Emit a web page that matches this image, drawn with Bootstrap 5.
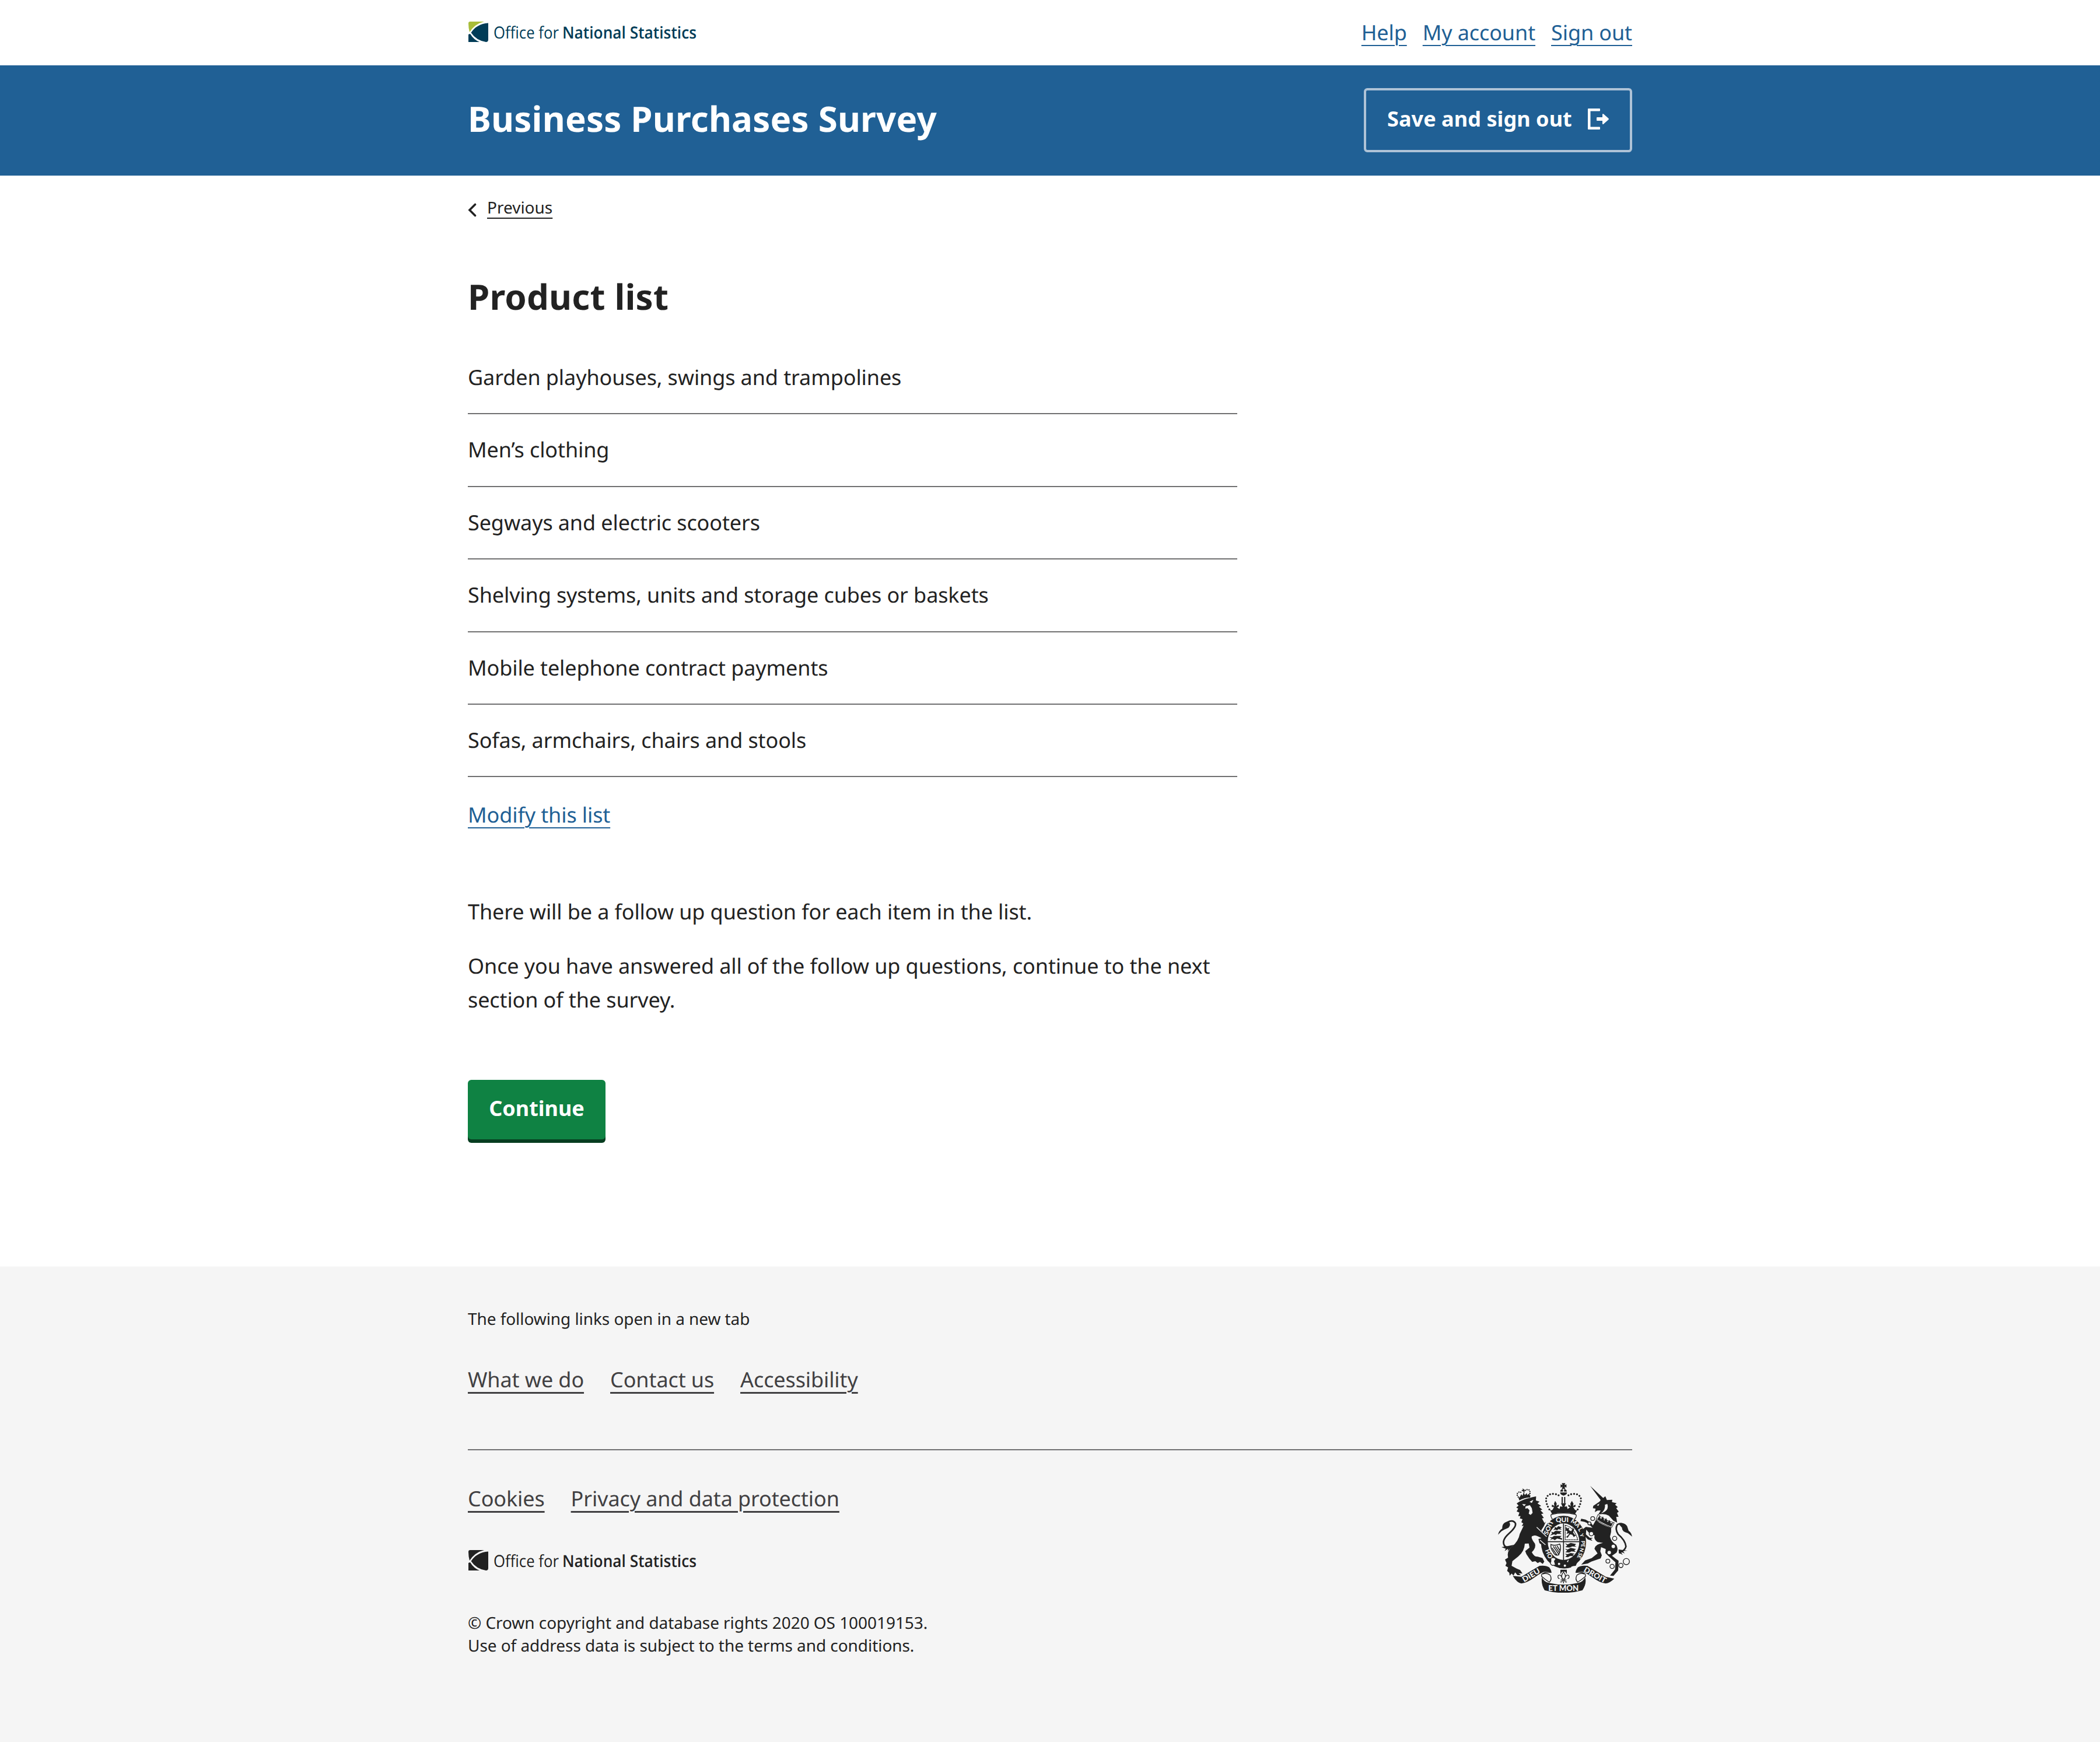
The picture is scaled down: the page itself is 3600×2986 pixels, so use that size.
<!DOCTYPE html>
<html lang="en">
<head>
<meta charset="utf-8">
<meta name="viewport" content="width=device-width, initial-scale=1">
<title>Product list - Business Purchases Survey</title>
<link href="https://cdn.jsdelivr.net/npm/bootstrap@5.3.0/dist/css/bootstrap.min.css" rel="stylesheet">
<style>
  body { font-family: "Noto Sans", sans-serif; font-size: 36px; line-height: 58px; color: #222; background: #fff; text-rendering: geometricPrecision; letter-spacing: -.11px; }
  .ons-wrap { width: 1996px; margin-left: 802px; }
  .ons-narrow { width: 1319px; }
  a { color: #206095; text-decoration: underline; text-decoration-thickness: 2px; text-underline-offset: 8px; }
  .ons-top { height: 112px; }
  .ons-top .ons-logo { margin-top: 31px; }
  .ons-toplinks { gap: 27px; padding-top: 27px; }
  .ons-banner { height: 189px; background: #206095; padding-top: 39px; }
  .ons-title { font-size: 60px; line-height: 80px; font-weight: 700; margin: 0; letter-spacing: .19px; }
  .ons-banner .ons-title { margin-top: 12px; color: #fff; }
  .ons-save { width: 460px; height: 110px; padding: 20px 36px 0; border: 4px solid #afc3d7; border-radius: 6px; color: #fff; font-size: 36px; line-height: 58px; font-weight: 700; letter-spacing: .06px; }
  .ons-save svg { margin-top: 11px; }
  .ons-back { padding-top: 35px; font-size: 28px; line-height: 40px; letter-spacing: 0; }
  .ons-back a { color: #222; margin-left: 18px; text-underline-offset: 7px; }
  .ons-back svg { margin-top: 12px; }
  .ons-main { height: 1870px; }
  .ons-heading { margin-top: 92px; }
  .ons-items { margin-top: 38px; }
  .ons-items li { padding: 32px 0; line-height: 58.4px; border-bottom: 2px solid #707071; }
  .ons-modify { margin-top: 35.6px; }
  .ons-text { margin-top: 108px; }
  .ons-text p { margin-bottom: 35px; }
  .ons-go { margin-top: 108px; width: 236px; height: 102px; padding: 20px 0 0; border: 0; border-radius: 6px; background: #0f8243; color: #fff; font-size: 36px; line-height: 58px; font-weight: 700; letter-spacing: 0; box-shadow: 0 6px 0 #073d20; }
  .ons-foot { height: 815px; background: #f5f5f5; padding-top: 70px; }
  .ons-foot a { color: #414042; text-decoration-thickness: 3px; }
  .ons-fine { font-size: 28px; line-height: 40px; margin: 0; letter-spacing: -.07px; }
  .ons-links { gap: 45px; }
  .ons-foot .ons-links.first { margin-top: 55px; }
  .ons-rule { margin-top: 90px; height: 2px; background: #707071; }
  .ons-links.second { margin-top: 54px; }
  .ons-foot .ons-logo { margin-top: 53px; }
  .ons-copy { margin-top: 56px; font-size: 28px; line-height: 39px; letter-spacing: -.06px; }
  .ons-crest { margin-top: 56px; letter-spacing: 0; }
  .ons-logo { display: block; overflow: visible; letter-spacing: 0; }
</style>
</head>
<body>
<header>
  <div class="ons-top">
    <div class="ons-wrap d-flex justify-content-between align-items-start">
      <svg class="ons-logo" width="420" height="56" viewBox="0 0 420 56">
        <path fill="#a8bd3a" d="M1 9Q1 6 4 6H28Q12 10 3 24Q1 17 1 9Z"/>
        <path fill="#003c57" d="M35 8.500V37Q35 41 31 41Q14 38 5.500 25Q15 10 35 8.500ZM1 28L4 27Q10 37 20 41H1Z"/>
        <g fill="#003c57" font-family="Open Sans, Noto Sans, sans-serif" font-size="28.500"><text x="44" y="35" font-weight="390" textLength="112" lengthAdjust="spacingAndGlyphs">Office for</text><text x="162" y="35" font-weight="640" textLength="230" lengthAdjust="spacingAndGlyphs">National Statistics</text></g>
      </svg>
      <nav class="ons-toplinks d-flex"><a href="#">Help</a><a href="#">My account</a><a href="#">Sign out</a></nav>
    </div>
  </div>
  <div class="ons-banner">
    <div class="ons-wrap d-flex justify-content-between align-items-start">
      <div class="ons-title">Business Purchases Survey</div>
      <button class="ons-save btn d-flex justify-content-between align-items-start" type="button"><span>Save and sign out</span>
        <svg width="36" height="36" viewBox="0 0 36 36" fill="#fff"><path d="M1 0H20Q21 0 21 1V3.500Q21 4.500 20 4.500H4.500V31.500H20Q21 31.500 21 32.500V35Q21 36 20 36H1Q0 36 0 35V1Q0 0 1 0Z"/><path d="M16 15H25V10.500Q25 8 27 9.500L35.500 17Q36.200 18 35.500 19L27 26.500Q25 28 25 25.500V21H16Q15 21 15 20V16Q15 15 16 15Z"/></svg>
      </button>
    </div>
  </div>
</header>
<main class="ons-main">
  <div class="ons-wrap">
    <div class="ons-back d-flex align-items-start"><svg width="15" height="24" viewBox="0 0 15 24"><path d="M12.500 2.500L3 12L12.500 21.500" fill="none" stroke="#222" stroke-width="3.600" stroke-linecap="round"/></svg><a href="#">Previous</a></div>
    <div class="ons-narrow">
      <h1 class="ons-title ons-heading">Product list</h1>
      <ul class="ons-items list-unstyled mb-0">
        <li>Garden playhouses, swings and trampolines</li>
        <li>Men’s clothing</li>
        <li>Segways and electric scooters</li>
        <li>Shelving systems, units and storage cubes or baskets</li>
        <li>Mobile telephone contract payments</li>
        <li>Sofas, armchairs, chairs and stools</li>
      </ul>
      <div class="ons-modify"><a href="#">Modify this list</a></div>
      <div class="ons-text"><p>There will be a follow up question for each item in the list.</p><p>Once you have answered all of the follow up questions, continue to the next section of the survey.</p></div>
      <button class="ons-go btn d-flex justify-content-center align-items-start" type="button">Continue</button>
    </div>
  </div>
</main>
<footer class="ons-foot">
  <div class="ons-wrap">
    <p class="ons-fine">The following links open in a new tab</p>
    <div class="ons-links first d-flex"><a href="#">What we do</a><a href="#">Contact us</a><a href="#">Accessibility</a></div>
    <div class="ons-rule"></div>
    <div class="d-flex justify-content-between align-items-start">
      <div>
        <div class="ons-links second d-flex"><a href="#">Cookies</a><a href="#">Privacy and data protection</a></div>
        <svg class="ons-logo" width="420" height="56" viewBox="0 0 420 56">
          <path fill="#222" d="M1 9Q1 6 4 6H28Q12 10 3 24Q1 17 1 9Z"/>
          <path fill="#222" d="M35 8.500V37Q35 41 31 41Q14 38 5.500 25Q15 10 35 8.500ZM1 28L4 27Q10 37 20 41H1Z"/>
          <g fill="#222" font-family="Open Sans, Noto Sans, sans-serif" font-size="28.500"><text x="44" y="35" font-weight="390" textLength="112" lengthAdjust="spacingAndGlyphs">Office for</text><text x="162" y="35" font-weight="640" textLength="230" lengthAdjust="spacingAndGlyphs">National Statistics</text></g>
        </svg>
        <div class="ons-copy">© Crown copyright and database rights 2020 OS 100019153.<br>Use of address data is subject to the terms and conditions.</div>
      </div>
      <svg class="ons-crest" width="230" height="188" viewBox="54 36 690 564" fill="#222">
        <!-- central crown -->
        <path d="M386 47L382 37H400L396 47L406 43V60L396 55L400 66H382L386 55L376 60V43ZM374 80Q376 68 388 67V80ZM394 80V67Q406 68 408 80ZM373 85H409Q408 98 391 101Q375 98 373 85Z"/>
        <path d="M384 108V140M397 108V140" stroke="#222" stroke-width="6"/>
        <path d="M318 172Q300 140 301 118Q308 92 336 92Q362 92 376 108M464 172Q482 140 481 118Q474 92 446 92Q420 92 406 108" fill="none" stroke="#222" stroke-width="10" stroke-linecap="round" stroke-dasharray="0 15"/>
        <path d="M320 172Q328 182 336 172L342 158Q326 164 332 148Q340 150 344 156L342 142L348 128L356 142L354 156Q358 150 366 148Q370 162 356 160L370 170L374 156L386 158L378 140H404L396 158L408 156L412 170L426 160Q412 162 416 148Q424 150 428 156L426 142L434 128L442 142L440 156Q444 150 452 148Q456 164 440 158L448 172Q456 182 464 172L450 196Q391 182 332 196Z"/>
        <path d="M328 198Q391 184 454 198Q462 206 448 222M328 198Q322 206 334 222" fill="none" stroke="#222" stroke-width="4"/>
        <!-- garter and shield -->
        <ellipse cx="391" cy="340" rx="116" ry="135"/>
        <ellipse cx="391" cy="338" rx="81" ry="94" fill="#f5f5f5"/>
        <path d="M391 244V432M309 338H473" stroke="#222" stroke-width="5"/>
        <path d="M400 252V328H466M402 254Q444 264 464 326" fill="none" stroke="#222" stroke-width="4" stroke-dasharray="6 2"/>
        <path d="M345 262L356 266L364 258L382 264L374 270L382 276L364 274L358 280L350 276L338 278L346 270ZM328 286L338 290L350 282L382 284L372 292L382 298L358 298L352 304L342 300L322 306L332 296ZM318 314L332 316L342 308L382 308L372 316L384 322L384 328L358 322L346 330L336 324L320 330L330 322Z"/>
        <path d="M398 346L412 352L428 344L456 350L448 358L458 364L436 362L422 368L400 366L410 358ZM398 374L412 378L428 370L456 376L446 382L454 390L432 388L420 394L400 392L410 384ZM398 400L412 402L428 396L448 400L438 406L446 412L424 412L414 418L400 416L408 408Z"/>
        <path d="M404 262L412 270L420 266L418 278L430 284L438 272L434 264L446 274L440 290L448 302L456 304L444 314L436 302L424 300L412 318L404 314L416 304L420 294L406 298L412 286L402 280Z"/>
        <path d="M326 352Q346 362 372 350Q382 372 366 406Q346 412 338 390Q324 374 326 352ZM338 362L366 402M348 362L370 394M358 360L373 384M332 370L358 408" fill="none" stroke="#222" stroke-width="4.500"/>
        <g fill="#f5f5f5" font-family="Lato, sans-serif" font-weight="900" font-size="34">
          <text transform="translate(296 382) rotate(68)" font-size="31">HO</text>
          <text transform="translate(309 305) rotate(-66)" font-size="31" textLength="77" lengthAdjust="spacingAndGlyphs">SOIT</text>
          <text x="351" y="237" font-size="33" textLength="66" lengthAdjust="spacingAndGlyphs">QUI</text>
          <text transform="translate(426 237) rotate(32)" font-size="31">M</text>
          <text transform="translate(449 253) rotate(46)" font-size="30">A</text>
          <text transform="translate(465 274) rotate(60)" font-size="30">L</text>
          <text transform="translate(474 299) rotate(75)" font-size="25">Y</text>
          <text transform="translate(482 333) rotate(91)" font-size="27">PE</text>
          <text transform="translate(478 368) rotate(104)" font-size="27">N</text>
          <text transform="translate(471 392) rotate(112)" font-size="27">SE</text>
        </g>
        <path d="M326 424Q338 414 352 426L344 438L350 458L334 460Q318 452 326 440Z" fill="#f5f5f5" stroke="#222" stroke-width="4"/>
        <path d="M354 428Q392 446 434 428L430 470Q391 482 352 466Z"/>
        <g fill="#f5f5f5"><circle cx="368" cy="452" r="6"/><circle cx="398" cy="461" r="6"/><path d="M408 440L418 428L414 444Z"/></g>
        <path d="M418 466L470 424L454 462Z"/>
        <!-- lion -->
        <path d="M164 124Q190 108 220 112L216 98Q222 84 216 72Q198 62 180 80Q164 72 154 88Q148 100 164 124Z" fill="#f5f5f5"/>
        <path d="M164 126L159 112Q190 96 221 100L219 111Q192 110 164 126ZM166 108L174 94L180 102L186 84L192 98L202 88L204 98L216 90L217 102Q190 98 166 110ZM174 74L183 70L179 63L187 68L193 75L184 80Z"/>
        <path d="M158 108Q148 96 156 86Q166 78 178 88M188 82Q196 68 212 70Q223 82 216 98" fill="none" stroke="#222" stroke-width="7" stroke-linecap="round" stroke-dasharray="0 10"/>
        <path d="M150 142Q174 120 250 105L249 126L268 132L257 141L276 154L265 158L282 173L272 176L288 193L276 196L290 216L280 218L293 242L300 235L290 258L276 280L302 312L300 328L306 346L307 372L284 358L267 345L262 324L278 320Q246 300 234 308Q216 310 244 348Q252 368 228 392Q240 416 258 415L283 422L292 440L284 452L270 442L258 448L246 438L230 442L216 426L200 402L194 386L216 368L212 347L192 348Q190 388 158 414L128 438L124 462L150 476L168 484L180 502L160 500L172 510L154 510L142 496L134 512L124 502L114 513L112 498L101 488L106 470L92 462L98 448L90 430L106 420Q98 386 126 364Q160 334 166 298L186 256L176 258L184 244L174 238L180 222L166 218L170 206L158 206L164 188L150 182L158 168L148 162L160 152Z"/>
        <g fill="#f5f5f5"><path d="M178 144L198 146L188 155ZM216 133L236 122L228 139ZM196 156L218 150L228 166L232 190L222 200L212 194L216 176L206 166L194 168Z"/></g>
        <path d="M253 263L304 312M270 330L298 354" stroke="#f5f5f5" stroke-width="4"/>
        <path d="M102 238Q132 222 144 244Q148 264 110 296Q72 330 86 356Q94 372 122 364" fill="none" stroke="#222" stroke-width="8"/>
        <path d="M54 302Q58 282 76 270Q74 238 108 233Q124 246 108 266Q88 274 72 284ZM72 366L106 360L136 354L104 386L106 374L88 386L94 374Z"/>
        <!-- unicorn -->
        <path d="M528 51L595 113L606 104L614 124L642 122L640 134L664 140L656 148L670 160L662 166L675 184L666 190L674 210L662 210L667 240L648 230L624 204Q604 192 570 198L582 178L566 178L552 186L556 168L542 166L544 154L576 132L582 124Z"/>
        <path d="M616 144Q628 178 584 192Q608 174 604 148ZM562 150L576 142L570 154Z" fill="#f5f5f5"/>
        <path d="M568 198Q604 230 652 240L638 266Q592 250 558 224Z" fill="#f5f5f5" stroke="#222" stroke-width="3"/>
        <path d="M566 220L576 204L583 222L594 208L600 230L610 216L618 238L628 226L634 244L646 240L636 260Q600 248 562 222Z"/>
        <path d="M558 226Q588 254 636 266Q638 288 630 312Q636 340 662 354Q674 374 664 394L640 410L660 426L674 436L672 486L648 514L630 512L656 480L658 444L622 412L606 396L608 376L584 366L580 388L588 408L582 424L534 440L516 450L482 456L502 434L536 422L566 398L550 374Q554 350 594 344L566 340Q544 324 551 306L520 290L508 276L506 300L526 318L542 318L532 324L540 334L516 326L498 306L490 274L506 262L540 266L516 244L500 236L478 232L482 220L504 224L532 240L542 254Z"/>
        <path d="M676 396Q710 382 712 362Q708 330 672 300Q654 272 668 250Q690 238 706 256" fill="none" stroke="#222" stroke-width="8"/>
        <path d="M676 248Q704 236 718 258L726 282Q740 290 744 312L722 294Q690 286 692 266ZM674 378L720 384L696 386L706 398L684 390L696 406L676 396Z"/>
        <g fill="#f5f5f5" stroke="#222" stroke-width="4"><circle cx="541" cy="219" r="10"/><circle cx="524" cy="244" r="8"/><circle cx="534" cy="297" r="11"/><circle cx="654" cy="321" r="11"/><circle cx="619" cy="438" r="10"/><circle cx="641" cy="465" r="11"/><circle cx="686" cy="460" r="11"/><circle cx="714" cy="440" r="16"/></g>
        <g fill="#f5f5f5"><circle cx="647" cy="362" r="9"/><circle cx="626" cy="394" r="9"/></g>
        <!-- motto ribbon -->
        <path d="M130 514L174 518Q224 488 268 462Q300 458 318 470Q328 482 330 498Q308 490 286 494Q262 506 238 524Q206 548 174 553Q152 550 130 514ZM652 528L608 518Q558 488 514 462Q482 458 464 470Q454 482 452 498Q474 490 496 494Q520 506 544 524Q576 548 608 553Q630 550 652 528Z"/>
        <path d="M326 496Q274 492 278 516Q296 532 318 546Q334 530 322 510Q306 496 284 504M456 496Q508 492 504 516Q486 532 464 546Q448 530 460 510Q476 496 498 504" fill="none" stroke="#222" stroke-width="4"/>
        <path d="M280 520Q290 546 316 550Q391 568 466 550Q492 546 502 520Q512 552 488 588Q391 614 294 588Q274 556 280 520Z"/>
        <g fill="#f5f5f5" font-family="Lato, sans-serif" font-weight="900" font-size="38">
          <text transform="translate(188 547) rotate(-31)" textLength="100" lengthAdjust="spacingAndGlyphs">DIEU</text>
          <text transform="translate(492 490) rotate(29)" textLength="126" lengthAdjust="spacingAndGlyphs">DROIT</text>
          <text x="313" y="591" font-size="41" textLength="156" lengthAdjust="spacingAndGlyphs">ET MON</text>
        </g>
        <path d="M375 482H408V505L400 492H384L375 505Z"/>
        <path d="M391 494Q408 514 395 530H387Q374 514 391 494ZM385 532Q380 502 364 512Q358 524 370 528M397 532Q402 502 418 512Q424 524 412 528M376 535H406M386 538Q382 548 374 544M396 538Q400 548 408 544M391 536V552" fill="none" stroke="#222" stroke-width="4"/>
      </svg>
    </div>
  </div>
</footer>
<script src="https://cdn.jsdelivr.net/npm/bootstrap@5.3.0/dist/js/bootstrap.bundle.min.js"></script>
</body>
</html>
